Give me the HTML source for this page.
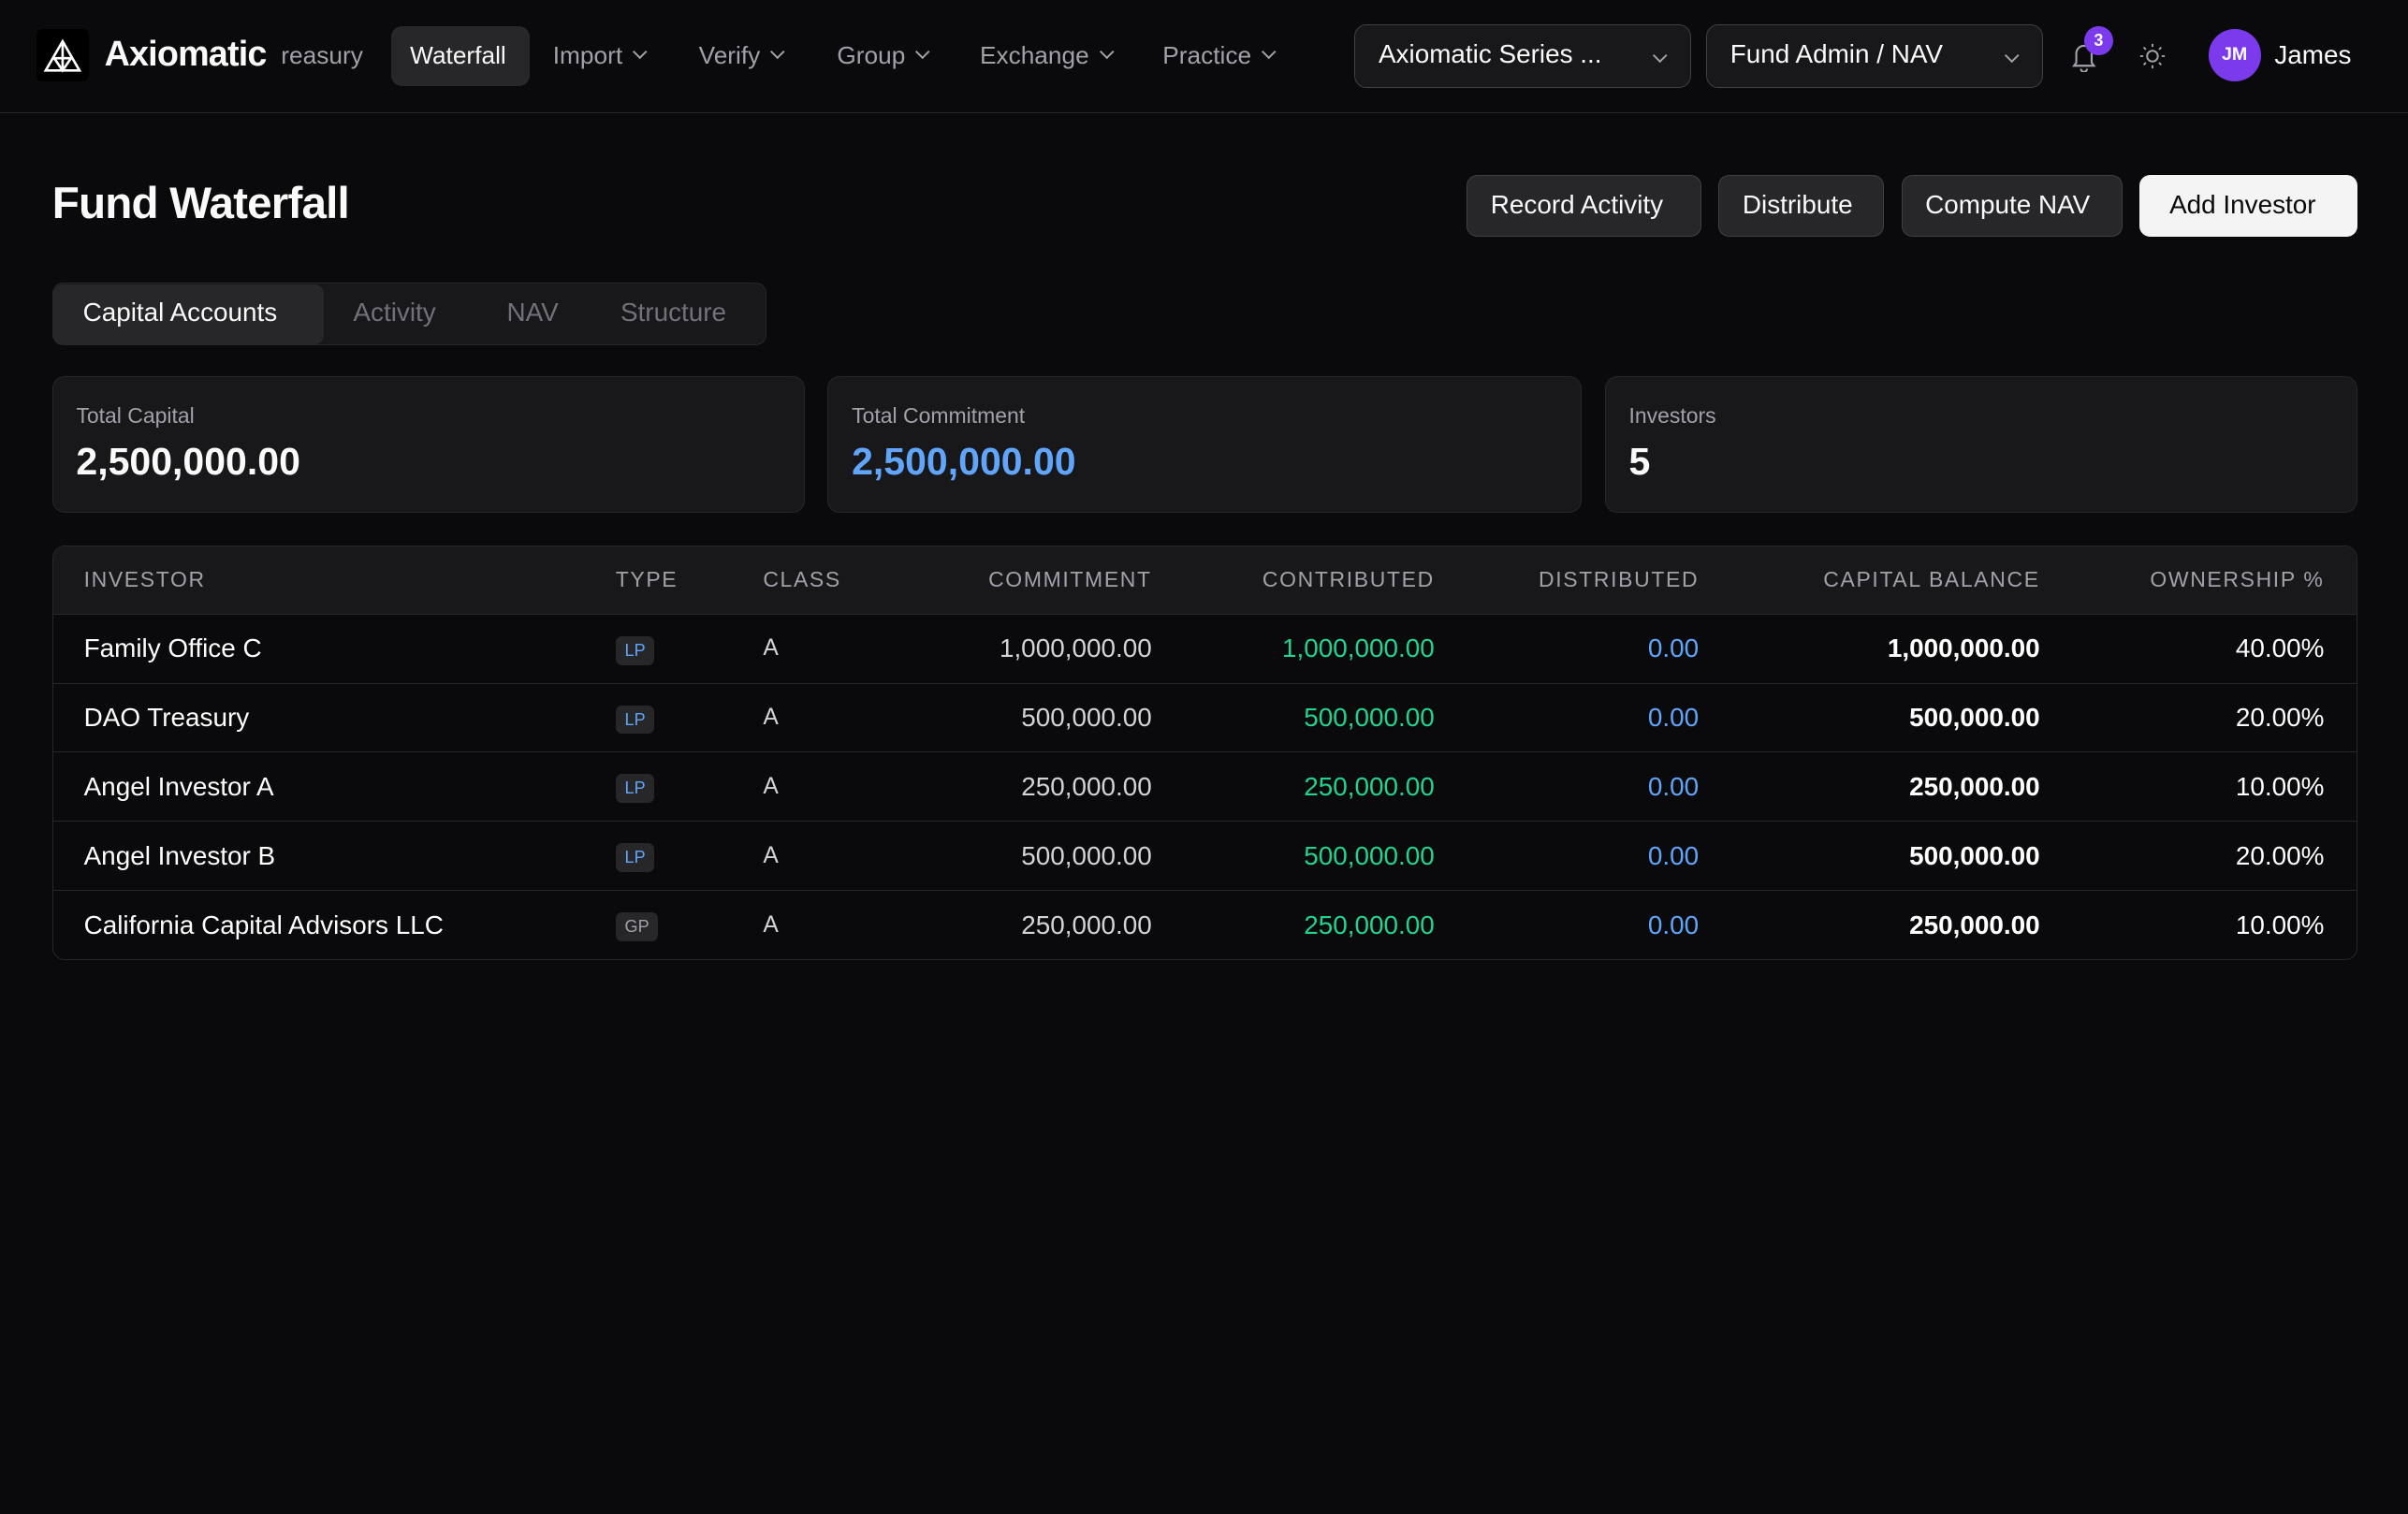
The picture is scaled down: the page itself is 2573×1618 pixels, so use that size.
<!DOCTYPE html>
<html><head><meta charset="utf-8"><style>
*{box-sizing:border-box;margin:0;padding:0}
html,body{width:2573px;height:1618px;background:#0a0a0c;overflow:hidden}
#r{zoom:1.641;width:1568px;height:986px;position:relative;font-family:"Liberation Sans",sans-serif;color:#fafafa}
.a{position:absolute;white-space:nowrap}
.nav{font-size:16px;color:#a1a1aa;top:27px}
.chev{display:inline-block;width:7px;height:7px;border-right:1.3px solid #a1a1aa;border-bottom:1.3px solid #a1a1aa;transform:rotate(45deg);margin-left:8px;position:relative;top:-4px}
.sel{top:16px;height:41px;border:1px solid #3f3f46;border-radius:8px;background:#18181b;font-size:17px;padding:9px 15px}
.btn{top:114px;height:40px;border:1px solid #3f3f46;border-radius:7px;background:#27272a;font-size:17px;padding:9px 15px}
.card{top:245px;height:89px;border:1px solid #27272a;border-radius:8px;background:#18181b}
.card .l{position:absolute;left:15px;top:17px;font-size:14px;color:#a1a1aa}
.card .v{position:absolute;left:15px;top:41px;font-size:25px;font-weight:bold}
table{position:absolute;left:34px;top:355px;width:1501px;table-layout:fixed;border:1px solid #27272a;border-radius:8px;border-collapse:separate;border-spacing:0;overflow:hidden;font-size:17px}
th{height:44px;background:#18181b;color:#a1a1aa;font-weight:normal;font-size:14px;letter-spacing:1px;text-align:right;padding:0 21px 0 0}
td{height:45px;border-top:1px solid #27272a;text-align:right;padding:0 21px 0 0;color:#d4d4d8}
th.l,td.l{text-align:left;padding-left:20px}
th.n,td.n{text-align:left;padding-left:0}
.tg{display:inline-block;background:#27272a;border-radius:4px;font-size:11px;padding:3px 6px;color:#60a5fa}
.g{color:#22d38f}.b{color:#60a5fa}.w{color:#fff;font-weight:bold}
</style></head><body><div id="r">
<div class="a" style="left:0;top:73px;width:1568px;height:1px;background:#27272a"></div>
<div class="a" style="left:24px;top:19px;width:34px;height:34px;background:#000;border-radius:4px">
<svg width="34" height="34" viewBox="0 0 34 34" fill="none" stroke="#fff" stroke-width="1.6"><path d="M17 8 L6 27 H28 Z M17 8 V27 M11 19 H23 M11.5 19 L17 27 L22.5 19"/></svg></div>
<div class="a" style="left:68px;top:22px;font-size:23px;font-weight:bold;letter-spacing:-0.5px">Axiomatic</div>
<div class="a nav" style="left:183px">reasury</div>
<div class="a" style="left:255px;top:17px;width:90px;height:39px;background:#27272a;border-radius:7px;font-size:16px;padding:10px 12px">Waterfall</div>
<div class="a nav" style="left:360px">Import<span class="chev"></span></div>
<div class="a nav" style="left:455px">Verify<span class="chev"></span></div>
<div class="a nav" style="left:545px">Group<span class="chev"></span></div>
<div class="a nav" style="left:638px">Exchange<span class="chev"></span></div>
<div class="a nav" style="left:757px">Practice<span class="chev"></span></div>
<div class="a sel" style="left:882px;width:219px">Axiomatic Series ...<span class="chev" style="position:absolute;right:16px;top:16px"></span></div>
<div class="a sel" style="left:1111px;width:219px">Fund Admin / NAV<span class="chev" style="position:absolute;right:16px;top:16px"></span></div>
<svg class="a" style="left:1348px;top:27px" width="18" height="20" viewBox="0 0 18 20" fill="none" stroke="#a1a1aa" stroke-width="1.3"><path d="M4 14 V8 a5 5 0 0 1 10 0 V14 L15.5 16 H2.5 Z M7 18 a2 2 0 0 0 4 0"/></svg>
<div class="a" style="left:1357px;top:17px;width:19px;height:19px;border-radius:50%;background:#7c3aed;font-size:11px;font-weight:bold;text-align:center;line-height:19px">3</div>
<svg class="a" style="left:1393px;top:28px" width="17" height="17" viewBox="0 0 17 17" fill="none" stroke="#a1a1aa" stroke-width="1.2"><circle cx="8.5" cy="8.5" r="3.5"/><path d="M8.5 0.5v2M8.5 14.5v2M0.5 8.5h2M14.5 8.5h2M2.8 2.8l1.4 1.4M12.8 12.8l1.4 1.4M2.8 14.2l1.4-1.4M12.8 4.2l1.4-1.4"/></svg>
<div class="a" style="left:1438px;top:19px;width:34px;height:34px;border-radius:50%;background:#7c3aed;font-size:12px;font-weight:bold;text-align:center;line-height:34px">JM</div>
<div class="a" style="left:1481px;top:26px;font-size:17px">James</div>

<div class="a" style="left:34px;top:116px;font-size:29px;font-weight:bold;letter-spacing:-0.5px">Fund Waterfall</div>
<div class="a btn" style="left:955px;width:153px">Record Activity</div>
<div class="a btn" style="left:1119px;width:108px">Distribute</div>
<div class="a btn" style="left:1238px;width:144px">Compute NAV</div>
<div class="a btn" style="left:1393px;width:142px;background:#f4f4f5;border-color:#f4f4f5;color:#0a0a0c;padding-left:19px">Add Investor</div>

<div class="a" style="left:34px;top:184px;width:465px;height:41px;border:1px solid #27272a;border-radius:7px;background:#18181b"></div>
<div class="a" style="left:35px;top:185px;width:176px;height:39px;background:#27272a;border-radius:6px;font-size:17px;padding:9px 19px">Capital Accounts</div>
<div class="a" style="left:230px;top:194px;font-size:17px;color:#71717a">Activity</div>
<div class="a" style="left:330px;top:194px;font-size:17px;color:#71717a">NAV</div>
<div class="a" style="left:404px;top:194px;font-size:17px;color:#71717a">Structure</div>

<div class="a card" style="left:34px;width:490px"><div class="l">Total Capital</div><div class="v">2,500,000.00</div></div>
<div class="a card" style="left:539px;width:491px"><div class="l">Total Commitment</div><div class="v" style="color:#60a5fa">2,500,000.00</div></div>
<div class="a card" style="left:1045px;width:490px"><div class="l">Investors</div><div class="v">5</div></div>

<table>
<colgroup><col style="width:366px"><col style="width:96px"><col style="width:80px"><col style="width:194px"><col style="width:184px"><col style="width:172px"><col style="width:222px"><col style="width:185px"></colgroup>
<tr><th class="l">INVESTOR</th><th class="n">TYPE</th><th class="n">CLASS</th><th>COMMITMENT</th><th>CONTRIBUTED</th><th>DISTRIBUTED</th><th>CAPITAL BALANCE</th><th>OWNERSHIP %</th></tr>
<tr><td class="l" style="color:#fff">Family Office C</td><td class="n"><span class="tg">LP</span></td><td class="n" style="font-size:15px">A</td><td>1,000,000.00</td><td class="g">1,000,000.00</td><td class="b">0.00</td><td class="w">1,000,000.00</td><td style="color:#fff">40.00%</td></tr>
<tr><td class="l" style="color:#fff">DAO Treasury</td><td class="n"><span class="tg">LP</span></td><td class="n" style="font-size:15px">A</td><td>500,000.00</td><td class="g">500,000.00</td><td class="b">0.00</td><td class="w">500,000.00</td><td style="color:#fff">20.00%</td></tr>
<tr><td class="l" style="color:#fff">Angel Investor A</td><td class="n"><span class="tg">LP</span></td><td class="n" style="font-size:15px">A</td><td>250,000.00</td><td class="g">250,000.00</td><td class="b">0.00</td><td class="w">250,000.00</td><td style="color:#fff">10.00%</td></tr>
<tr><td class="l" style="color:#fff">Angel Investor B</td><td class="n"><span class="tg">LP</span></td><td class="n" style="font-size:15px">A</td><td>500,000.00</td><td class="g">500,000.00</td><td class="b">0.00</td><td class="w">500,000.00</td><td style="color:#fff">20.00%</td></tr>
<tr><td class="l" style="color:#fff">California Capital Advisors LLC</td><td class="n"><span class="tg" style="color:#a1a1aa">GP</span></td><td class="n" style="font-size:15px">A</td><td>250,000.00</td><td class="g">250,000.00</td><td class="b">0.00</td><td class="w">250,000.00</td><td style="color:#fff">10.00%</td></tr>
</table>
</div></body></html>
